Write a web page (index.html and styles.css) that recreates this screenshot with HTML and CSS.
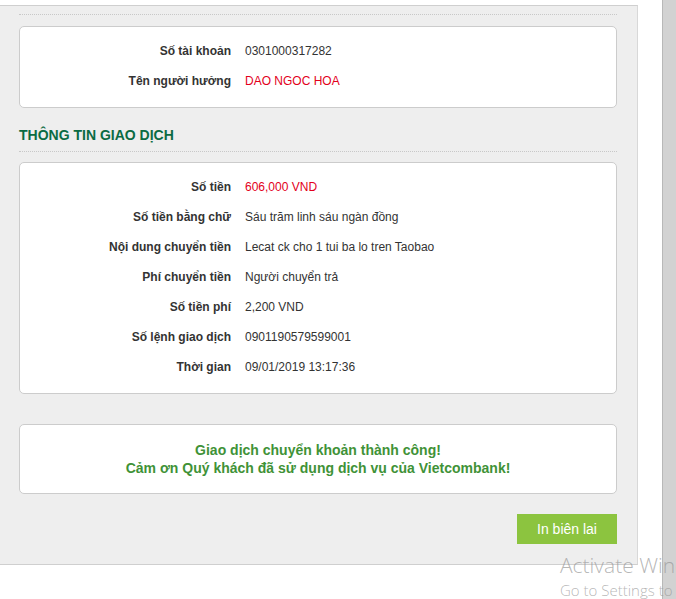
FILE: index.html
```html
<!DOCTYPE html>
<html lang="vi">
<head>
<meta charset="utf-8">
<title>Vietcombank</title>
<link rel="stylesheet" href="styles.css">
</head>
<body>
<div class="page">
  <div class="main">
    <div class="panel">
      <div class="rule top-rule"></div>
      <div class="card">
        <div class="row"><span class="label">Số tài khoản</span><span class="value">0301000317282</span></div>
        <div class="row"><span class="label">Tên người hưởng</span><span class="value red">DAO NGOC HOA</span></div>
      </div>
      <h2 class="heading">THÔNG TIN GIAO DỊCH</h2>
      <div class="card">
        <div class="row"><span class="label">Số tiền</span><span class="value red">606,000 VND</span></div>
        <div class="row"><span class="label">Số tiền bằng chữ</span><span class="value">Sáu trăm linh sáu ngàn đồng</span></div>
        <div class="row"><span class="label">Nội dung chuyển tiền</span><span class="value">Lecat ck cho 1 tui ba lo tren Taobao</span></div>
        <div class="row"><span class="label">Phí chuyển tiền</span><span class="value">Người chuyển trả</span></div>
        <div class="row"><span class="label">Số tiền phí</span><span class="value">2,200 VND</span></div>
        <div class="row"><span class="label">Số lệnh giao dịch</span><span class="value">0901190579599001</span></div>
        <div class="row"><span class="label">Thời gian</span><span class="value">09/01/2019 13:17:36</span></div>
      </div>
      <div class="card success">
        <p>Giao dịch chuyển khoản thành công!</p>
        <p>Cảm ơn Quý khách đã sử dụng dịch vụ của Vietcombank!</p>
      </div>
      <div class="actions">
        <button class="btn" type="button">In biên lai</button>
      </div>
    </div>
  </div>
  <div class="gutter"></div>
  <div class="scrollbar"></div>
  <div class="watermark">
    <div class="wm-title">Activate Windows</div>
    <div class="wm-sub">Go to Settings to activate Windows.</div>
  </div>
</div>
</body>
</html>
```
FILE: styles.css
```css
html, body {
  margin: 0;
  padding: 0;
  background: #ffffff;
  overflow: hidden;
}
body {
  font-family: "Liberation Sans", Arial, sans-serif;
  font-size: 12px;
  color: #333333;
}
.page {
  position: relative;
  display: flex;
  width: 676px;
  height: 599px;
  overflow: hidden;
}
.main {
  width: 638px;
  padding-top: 5px;
  flex: none;
}
.panel {
  box-sizing: border-box;
  width: 638px;
  background: #eeeeee;
  border-top: 1px solid #cfcfcf;
  border-right: 1px solid #d8d8d8;
  border-bottom: 1px solid #cfcfcf;
  padding: 0 20px 20px 19px;
}
.rule {
  border-bottom: 1px dotted #c8c8c8;
}
.top-rule {
  height: 8px;
  margin-bottom: 11px;
}
.card {
  background: #ffffff;
  border: 1px solid #cccccc;
  border-radius: 5px;
  padding: 9px 0 11px;
}
.row {
  display: flex;
  align-items: center;
  height: 30px;
}
.label {
  width: 211px;
  flex: none;
  text-align: right;
  font-weight: bold;
  color: #333333;
}
.value {
  margin-left: 14px;
  color: #333333;
}
.red {
  color: #e3001b;
}
.heading {
  margin: 18px 0 10px;
  padding-bottom: 7px;
  border-bottom: 1px dotted #c8c8c8;
  font-size: 14px;
  line-height: 18px;
  font-weight: bold;
  color: #0b6b43;
}
.success {
  margin-top: 30px;
  padding: 16px 0 16px;
  text-align: center;
}
.success p {
  margin: 0;
  font-size: 14px;
  line-height: 18px;
  font-weight: bold;
  color: #3f9237;
}
.actions {
  display: flex;
  justify-content: flex-end;
  margin-top: 20px;
}
.btn {
  width: 100px;
  height: 30px;
  border: none;
  background: #8cc43f;
  color: #ffffff;
  font-family: "Liberation Sans", Arial, sans-serif;
  font-size: 14px;
  padding: 0;
  margin: 0;
}
.gutter {
  width: 24px;
  flex: none;
  background: #ffffff;
}
.scrollbar {
  flex: 1;
  background: #d2d2d2;
  border-left: 1px solid #b8b8b8;
}
.watermark {
  position: absolute;
  left: 560px;
  top: 552px;
  white-space: nowrap;
  color: rgba(150, 150, 150, 0.7);
  font-family: "Open Sans", "DejaVu Sans", sans-serif;
  font-weight: 300;
}
.wm-title {
  font-size: 21px;
  line-height: 27px;
}
.wm-sub {
  font-size: 15px;
  line-height: 22px;
}
```
